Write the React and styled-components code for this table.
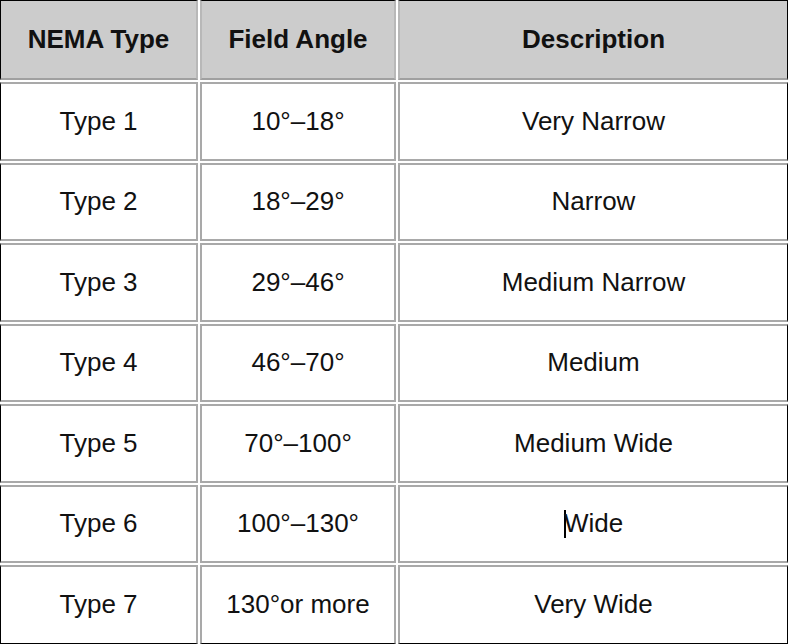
import React from 'react';
import styled, { createGlobalStyle } from 'styled-components';

const GlobalStyle = createGlobalStyle`
  html, body {
    margin: 0;
    padding: 0;
    background: #ffffff;
    overflow: hidden;
  }
  body {
    font-family: "Liberation Sans", Arial, sans-serif;
  }
`;

const Grid = styled.div`
  display: grid;
  width: 788px;
  grid-template-columns: 198px 196px 1fr;
  grid-template-rows: 80px repeat(7, 78.5px);
  gap: 2px;
  font-family: "Liberation Sans", Arial, sans-serif;
  font-size: 26px;
  color: #111;
`;

const Cell = styled.div`
  box-sizing: border-box;
  display: flex;
  align-items: center;
  justify-content: center;
  background: ${(p) => (p.$head ? '#cccccc' : '#ffffff')};
  font-weight: ${(p) => (p.$head ? 'bold' : 'normal')};
  border: 2px solid ${(p) => (p.$head ? '#b8b8b8' : '#a9a9a9')};
  border-bottom-color: ${(p) => (p.$head ? '#a0a0a0' : '#a9a9a9')};
  ${(p) => p.$first && 'border-left: 1px solid #000;'}
  ${(p) => p.$last && 'border-right: 1px solid #000;'}
  ${(p) => p.$head && 'border-top: 1px solid #000;'}
  ${(p) => p.$bottom && 'border-bottom: 1px solid #000;'}
`;

const Caret = styled.span`
  display: inline-block;
  width: 2px;
  height: 28px;
  margin-right: -2px;
  background: #000;
  align-self: center;
`;

const headers = ['NEMA Type', 'Field Angle', 'Description'];

const rows = [
  ['Type 1', '10°–18°', 'Very Narrow'],
  ['Type 2', '18°–29°', 'Narrow'],
  ['Type 3', '29°–46°', 'Medium Narrow'],
  ['Type 4', '46°–70°', 'Medium'],
  ['Type 5', '70°–100°', 'Medium Wide'],
  ['Type 6', '100°–130°', 'Wide'],
  ['Type 7', '130°or more', 'Very Wide'],
];

const App = () => {
  return (
    <>
      <GlobalStyle />
      <Grid>
        {headers.map((h, i) => (
          <Cell key={h} $head $first={i === 0} $last={i === 2}>
            {h}
          </Cell>
        ))}
        {rows.map((row, r) =>
          row.map((text, i) => (
            <Cell
              key={`${r}-${i}`}
              $first={i === 0}
              $last={i === 2}
              $bottom={r === rows.length - 1}
            >
              {/* text cursor sits before "Wide" in the original */}
              {text === 'Wide' && <Caret />}
              {text}
            </Cell>
          ))
        )}
      </Grid>
    </>
  );
};

export default App;
